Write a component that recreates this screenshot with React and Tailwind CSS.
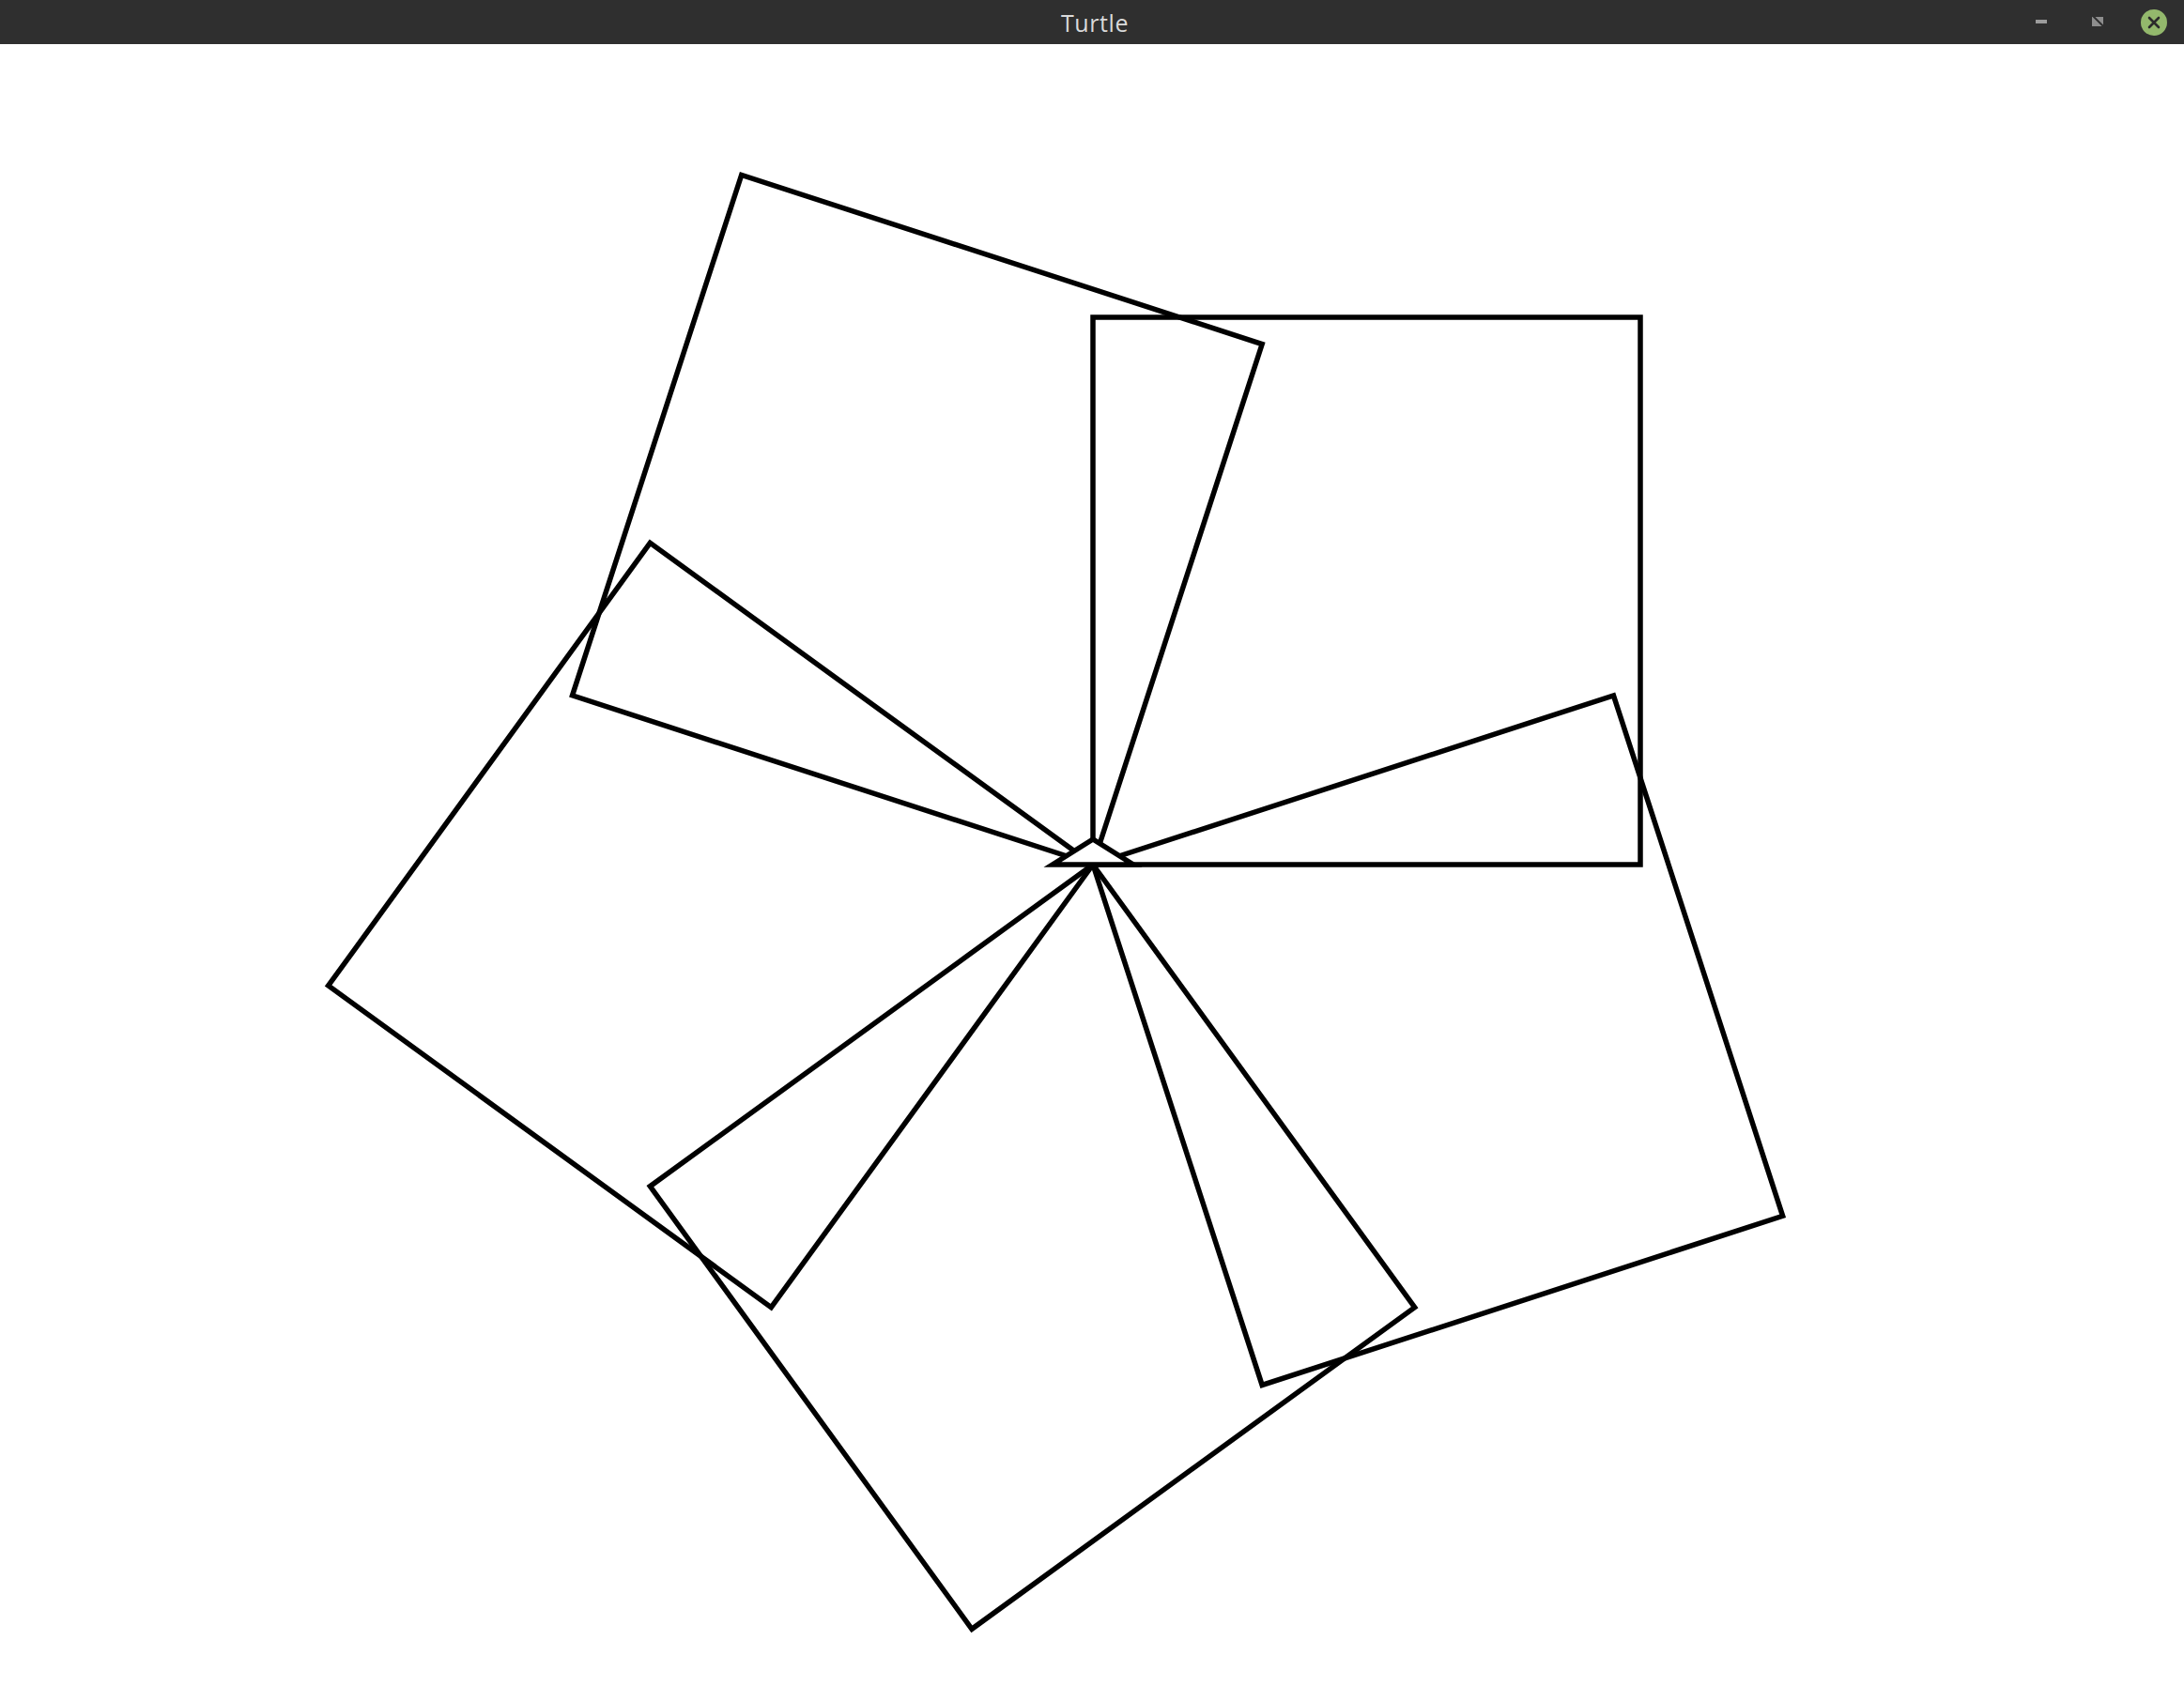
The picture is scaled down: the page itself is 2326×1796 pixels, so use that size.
import React from "react";

const C = { x: 1164, y: 921 };
const S = 583;
const TOP = 47;

function squares() {
  const out = [];
  for (let k = 0; k < 5; k++) {
    const h = (-72 * k * Math.PI) / 180;
    let x = C.x;
    let y = C.y;
    const pts = [[x, y]];
    for (let e = 0; e < 4; e++) {
      const a = h + (e * Math.PI) / 2;
      x += S * Math.cos(a);
      y -= S * Math.sin(a);
      pts.push([x, y]);
    }
    out.push(pts);
  }
  return out;
}

export default function App() {
  const sq = squares();
  return (
    <div
      className="w-[2326px] h-[1796px] flex flex-col bg-white overflow-hidden"
      style={{ fontFamily: '"Open Sans", "Noto Sans", sans-serif' }}
    >
      <div className="h-[47px] bg-[#2f2f2f] flex items-center shrink-0">
        <div className="flex-1" />
        <div className="text-[25px] tracking-[0.6px] text-[#dadada] leading-none pt-[1px] pl-[24px]">Turtle</div>
        <div className="flex-1 flex items-center justify-end pr-[18px]">
          <div className="w-[12px] h-[4px] bg-[#9c9c9c] mt-[-2px]" />
          <svg className="ml-[48px] mt-[-1px]" width="12" height="10" viewBox="0 0 12 10">
            <rect x="0" y="0" width="12" height="10" fill="#8e8e8e" />
            <line x1="1" y1="-1" x2="12" y2="10" stroke="#2f2f2f" strokeWidth="2" />
          </svg>
          <div className="ml-[40px] w-[28px] h-[28px] rounded-full bg-[#93b86c] flex items-center justify-center">
            <svg width="14" height="14" viewBox="0 0 14 14">
              <path d="M2 2 L12 12 M12 2 L2 12" stroke="#2b2b2b" strokeWidth="2.6" strokeLinecap="round" />
            </svg>
          </div>
        </div>
      </div>
      <div className="flex-1 bg-white">
        <svg width="2326" height="1749" viewBox={`0 ${TOP} 2326 1749`}>
          {sq.map((pts, i) => (
            <polyline
              key={i}
              points={pts.map((p) => p.join(",")).join(" ")}
              fill="none"
              stroke="#000"
              strokeWidth="5.5"
              strokeLinejoin="miter"
            />
          ))}
          <polygon
            points="1164,894 1121,921 1207,921"
            fill="#fff"
            stroke="#000"
            strokeWidth="5.5"
            strokeLinejoin="miter"
          />
        </svg>
      </div>
    </div>
  );
}
